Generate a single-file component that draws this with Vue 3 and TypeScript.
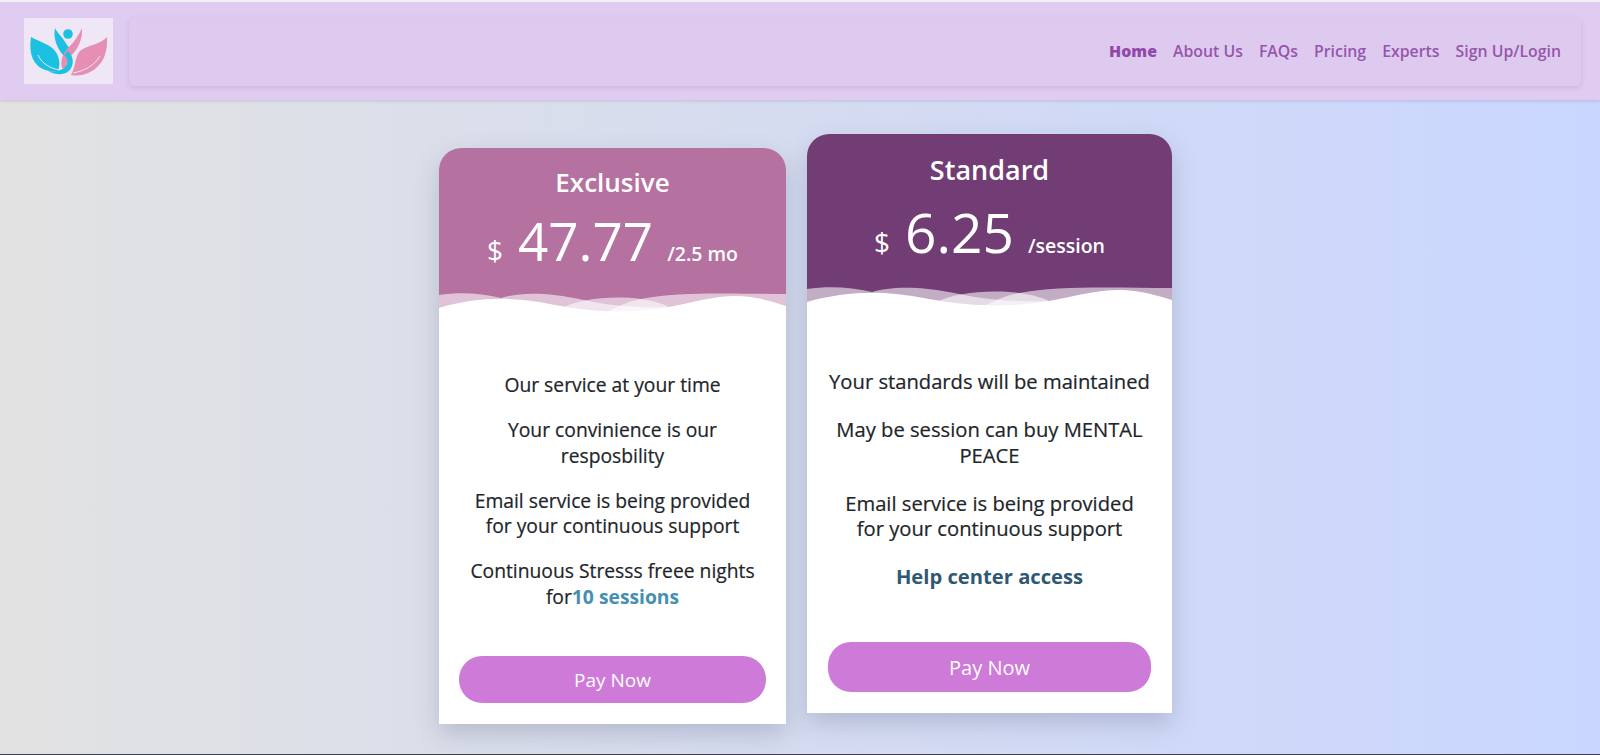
<script setup lang="ts">
interface Line {
  text: string;
  highlight?: string;
  tone?: 'teal' | 'navy';
}

interface Plan {
  id: string;
  name: string;
  price: string;
  unit: string;
  features: Line[];
}

const links = ['Home', 'About Us', 'FAQs', 'Pricing', 'Experts', 'Sign Up/Login'];

const plans: Plan[] = [
  {
    id: 'exclusive',
    name: 'Exclusive',
    price: '47.77',
    unit: '/2.5 mo',
    features: [
      { text: 'Our service at your time' },
      { text: 'Your convinience is our resposbility' },
      { text: 'Email service is being provided for\u00a0your continuous support' },
      { text: 'Continuous Stresss freee nights for', highlight: '10 sessions', tone: 'teal' },
    ],
  },
  {
    id: 'standard',
    name: 'Standard',
    price: '6.25',
    unit: '/session',
    features: [
      { text: 'Your standards will be maintained' },
      { text: 'May be session can buy MENTAL PEACE' },
      { text: 'Email service is being provided for\u00a0your continuous support' },
      { text: '', highlight: 'Help center access', tone: 'navy' },
    ],
  },
];
</script>

<template>
  <div class="page">
    <header class="topbar">
      <div class="logo">
        <svg viewBox="0 0 89 66" width="89" height="66">
          <path fill="#1cc0e0" d="M7 19C15 24 28 26 33 36C36 42 36 48 34 53C18 55 3 46 7 19Z" />
          <path fill="#e58fb4" d="M83 19C78 26 63 27 56 33C51 38 52 48 47 57C62 60 85 50 83 19Z" />
          <path fill="none" stroke="#efe6f6" stroke-width="1" d="M14 37C18 46 26 50 35 52M76 38C70 48 60 53 49 55" />
          <path fill="#1cc0e0" d="M31 10C33 15 38 18 43 27L47 32L43 38L39 37C33 30 29 20 31 10Z" />
          <path fill="#e58fb4" d="M58 10C59 22 53 32 47 38C43 42 42 47 43 52L38 50C36 42 39 35 45 29C50 24 55 17 58 10Z" />
          <path fill="#1cc0e0" d="M44 33C48 37 50 42 48 48C45 56 36 59 24 53C33 54 41 52 43 46C44 42 43 39 40 37Z" />
          <circle cx="44" cy="16" r="4.8" fill="#1cc0e0" />
        </svg>
      </div>
      <nav class="menu">
        <a v-for="(link, i) in links" :key="link" class="menu-link" :class="{ active: i === 0 }">{{ link }}</a>
      </nav>
    </header>

    <main class="plans">
      <section v-for="plan in plans" :key="plan.id" class="plan" :class="plan.id">
        <div class="plan-head">
          <h2 class="plan-name">{{ plan.name }}</h2>
          <div class="plan-price">
            <span class="currency">$</span>
            <span class="amount">{{ plan.price }}</span>
            <span class="unit">{{ plan.unit }}</span>
          </div>
          <svg class="wave" viewBox="0 0 347 26" preserveAspectRatio="none">
            <path fill="#fff" fill-opacity="0.58" d="M0 3C20 0 42 1 62 6L62 26L0 26Z" />
            <path fill="#fff" fill-opacity="0.58" d="M62 6C78 1 104 -1 145 8C170 14 200 16 230 15L230 26L62 26Z" />
            <path fill="#fff" fill-opacity="0.58" d="M125 15C140 8 170 3 202 7C215 9 225 12 230 15L230 26L125 26Z" />
            <path fill="#fff" fill-opacity="0.58" d="M170 19C180 14 190 9 202 7C240 -1 300 2 347 2L347 26L170 26Z" />
            <path fill="#fff" d="M0 16C26 8 58 5 84 8C112 11 126 16 150 18C178 21 208 19 230 15C254 10 280 3 300 4C318 5 332 9 347 14L347 26L0 26Z" />
          </svg>
        </div>
        <div class="plan-body">
          <ul class="features">
            <li v-for="line in plan.features" :key="line.text + line.highlight">
              {{ line.text }}<strong v-if="line.highlight" :class="line.tone">{{ line.highlight }}</strong>
            </li>
          </ul>
          <button class="pay" type="button">Pay Now</button>
        </div>
      </section>
    </main>
  </div>
</template>

<style>
html,
body {
  margin: 0;
}
</style>

<style scoped>
.page {
  height: 755px;
  box-sizing: border-box;
  overflow: hidden;
  border-top: 2px solid #f2eef6;
  border-bottom: 1px solid #3d4048;
  background: linear-gradient(to right, #e2e2e2, #c9d6ff);
  font-family: "Open Sans", "Noto Sans", sans-serif;
  color: #212529;
}

.topbar {
  display: flex;
  align-items: center;
  gap: 16px;
  height: 98px;
  padding: 0 19px 0 24px;
  box-sizing: border-box;
  background: #e0ccf0;
  box-shadow: 0 1px 3px rgba(120, 100, 150, 0.25);
}

.logo {
  width: 89px;
  height: 66px;
  background: #efe6f6;
  flex: none;
}

.logo svg {
  display: block;
}

.menu {
  flex: 1;
  height: 69px;
  display: flex;
  align-items: center;
  justify-content: flex-end;
  gap: 16px;
  padding-right: 20px;
  border-radius: 6px;
  background: #dfcaef;
  box-shadow: 0 2px 5px rgba(120, 90, 150, 0.18);
}

.menu-link {
  font-size: 15.85px;
  font-weight: 600;
  color: #9556ac;
}

.menu-link.active {
  font-weight: 800;
  color: #9148ab;
}

.plans {
  display: flex;
  justify-content: center;
  align-items: flex-start;
  gap: 21px;
  padding-left: 11px;
}

.plan {
  display: flex;
  flex-direction: column;
  background: #fff;
  border-radius: 22px 22px 0 0;
  box-shadow: 0 10px 24px rgba(90, 100, 130, 0.28);
}

.plan.exclusive {
  width: 347px;
  height: 576px;
  margin-top: 48px;
}

.plan.standard {
  width: 365px;
  height: 579px;
  margin-top: 34px;
}

.plan-head {
  position: relative;
  flex: none;
  border-radius: 22px 22px 0 0;
  color: #fff;
  text-align: center;
}

.exclusive .plan-head {
  height: 170px;
  background: #b5719f;
}

.standard .plan-head {
  height: 178px;
  background: #713d74;
}

.plan-name {
  margin: 0;
  padding-top: 16px;
  font-size: 26px;
  line-height: 36px;
  font-weight: 600;
}

.standard .plan-name {
  padding-top: 18px;
  font-size: 27px;
}

.plan-price {
  display: flex;
  justify-content: center;
  align-items: baseline;
  margin-top: 9px;
}

.standard .plan-price {
  margin-top: 12px;
}

.currency {
  font-size: 28px;
  margin-right: 15px;
}

.amount {
  font-size: 53px;
  line-height: 64px;
}

.standard .amount {
  font-size: 55px;
}

.unit {
  margin-left: 14px;
  font-size: 19.5px;
  font-weight: 600;
}

.wave {
  position: absolute;
  left: 0;
  right: 0;
  bottom: 0;
  width: 100%;
  height: 26px;
}

.plan-body {
  flex: 1;
  display: flex;
  flex-direction: column;
  padding: 0 20px;
}

.features {
  flex: 1;
  margin: 0;
  padding: 54px 0 0;
  list-style: none;
  text-align: center;
  font-size: 19.3px;
  line-height: 25.5px;
  font-weight: 500;
  -webkit-text-stroke: 0.2px #212529;
}

.standard .features {
  padding-top: 57px;
  font-size: 20.2px;
}

.features li {
  margin-bottom: 19.5px;
}

.standard .features li {
  margin-bottom: 22.5px;
}

.features strong {
  font-weight: 700;
}

.features .teal {
  color: #4590b0;
  -webkit-text-stroke: 0;
}

.features .navy {
  color: #2f5873;
  -webkit-text-stroke: 0;
}

.pay {
  height: 47px;
  margin-bottom: 21px;
  border: 0;
  border-radius: 23px;
  background: #ce7ad8;
  color: #fff;
  font: 400 19px "Open Sans", "Noto Sans", sans-serif;
}

.standard .pay {
  height: 50px;
  margin: 0 1px 21px;
  font-size: 20px;
}
</style>
